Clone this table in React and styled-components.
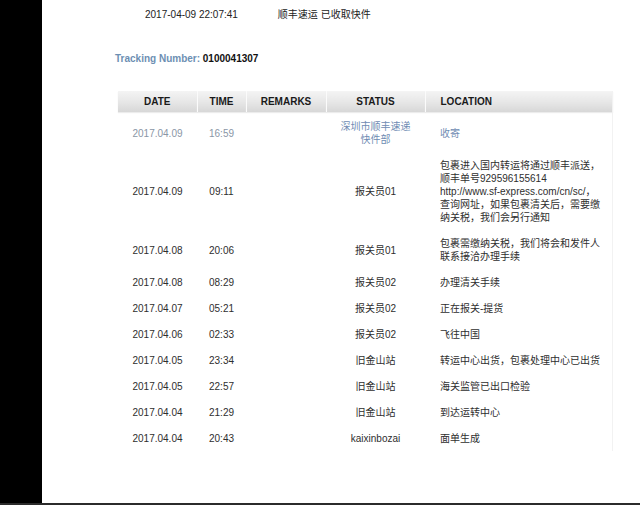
import styled, { createGlobalStyle } from "styled-components";

const GlobalStyle = createGlobalStyle`
  html, body {
    margin: 0;
    padding: 0;
    background: #2a2a2a;
  }
  body {
    font-family: "Liberation Sans", Arial, "Noto Sans CJK SC", sans-serif;
  }
`;

const Page = styled.div`
  width: 640px;
  height: 503px;
  display: flex;
  border-bottom: 2px solid #2b2b2b;
`;

const SideBar = styled.div`
  width: 42px;
  flex-shrink: 0;
  background: #000;
`;

const Main = styled.div`
  flex: 1;
  background: #fff;
  display: flex;
  flex-direction: column;
  color: #333;
  font-size: 10px;
  line-height: 13px;
`;

const TopLine = styled.div`
  display: flex;
  padding: 8px 0 0 103px;
  gap: 40px;
  color: #222;
`;

const Tracking = styled.div`
  padding: 31px 0 0 73px;
  font-weight: bold;
  color: #111;
`;

const TrackingLabel = styled.span`
  color: #6d8fb3;
`;

const Table = styled.table`
  margin: 26px 0 0 76px;
  width: 495px;
  border-collapse: collapse;
  table-layout: fixed;
  border-right: 1px solid #f2f2f2;
`;

const HeadCell = styled.th`
  height: 21px;
  padding: 0;
  font-size: 10px;
  font-weight: bold;
  color: #1a1a1a;
  text-align: ${(p) => (p.$left ? "left" : "center")};
  padding-left: ${(p) => (p.$left ? "15px" : "0")};
  background: linear-gradient(#f4f4f4, #e6e6e6 55%, #d7d7d7);
  border-left: ${(p) => (p.$first ? "none" : "1px solid #fbfbfb")};
  box-shadow: 0 1px 1px #ececec;
`;

const Cell = styled.td`
  padding: 7px 0 6px;
  vertical-align: middle;
  white-space: nowrap;
  text-align: ${(p) => (p.$left ? "left" : "center")};
  padding-left: ${(p) => (p.$left ? "15px" : "0")};
  color: ${(p) => p.$color || "#2e2e2e"};
`;

const Row = styled.tr`
  &:first-child td {
    padding-top: 8px;
  }
`;

const rows = [
  { date: "2017.04.09", time: "16:59", status: "深圳市顺丰速递\n快件部", location: "收寄", highlight: true },
  {
    date: "2017.04.09",
    time: "09:11",
    status: "报关员01",
    location:
      "包裹进入国内转运将通过顺丰派送，\n顺丰单号929596155614\nhttp://www.sf-express.com/cn/sc/，\n查询网址，如果包裹清关后，需要缴\n纳关税，我们会另行通知",
  },
  { date: "2017.04.08", time: "20:06", status: "报关员01", location: "包裹需缴纳关税，我们将会和发件人\n联系接洽办理手续" },
  { date: "2017.04.08", time: "08:29", status: "报关员02", location: "办理清关手续" },
  { date: "2017.04.07", time: "05:21", status: "报关员02", location: "正在报关-提货" },
  { date: "2017.04.06", time: "02:33", status: "报关员02", location: "飞往中国" },
  { date: "2017.04.05", time: "23:34", status: "旧金山站", location: "转运中心出货，包裹处理中心已出货" },
  { date: "2017.04.05", time: "22:57", status: "旧金山站", location: "海关监管已出口检验" },
  { date: "2017.04.04", time: "21:29", status: "旧金山站", location: "到达运转中心" },
  { date: "2017.04.04", time: "20:43", status: "kaixinbozai", location: "面单生成" },
];

const Lines = ({ text }) =>
  text.split("\n").map((line, i) => <div key={i}>{line}</div>);

export default function App() {
  return (
    <>
      <GlobalStyle />
      <Page>
        <SideBar />
        <Main>
          <TopLine>
            <span>2017-04-09 22:07:41</span>
            <span>顺丰速运 已收取快件</span>
          </TopLine>
          <Tracking>
            <TrackingLabel>Tracking Number:</TrackingLabel> 0100041307
          </Tracking>
          <Table>
            <colgroup>
              <col style={{ width: 79 }} />
              <col style={{ width: 49 }} />
              <col style={{ width: 80 }} />
              <col style={{ width: 99 }} />
              <col />
            </colgroup>
            <thead>
              <tr>
                <HeadCell $first>DATE</HeadCell>
                <HeadCell>TIME</HeadCell>
                <HeadCell>REMARKS</HeadCell>
                <HeadCell>STATUS</HeadCell>
                <HeadCell $left>LOCATION</HeadCell>
              </tr>
            </thead>
            <tbody>
              {rows.map((r, i) => (
                <Row key={i}>
                  <Cell $color={r.highlight ? "#8a96a6" : undefined}>{r.date}</Cell>
                  <Cell $color={r.highlight ? "#8a96a6" : undefined}>{r.time}</Cell>
                  <Cell />
                  <Cell $color={r.highlight ? "#6f8cb3" : undefined}>
                    <Lines text={r.status} />
                  </Cell>
                  <Cell $left $color={r.highlight ? "#6f8cb3" : undefined}>
                    <Lines text={r.location} />
                  </Cell>
                </Row>
              ))}
            </tbody>
          </Table>
        </Main>
      </Page>
    </>
  );
}
